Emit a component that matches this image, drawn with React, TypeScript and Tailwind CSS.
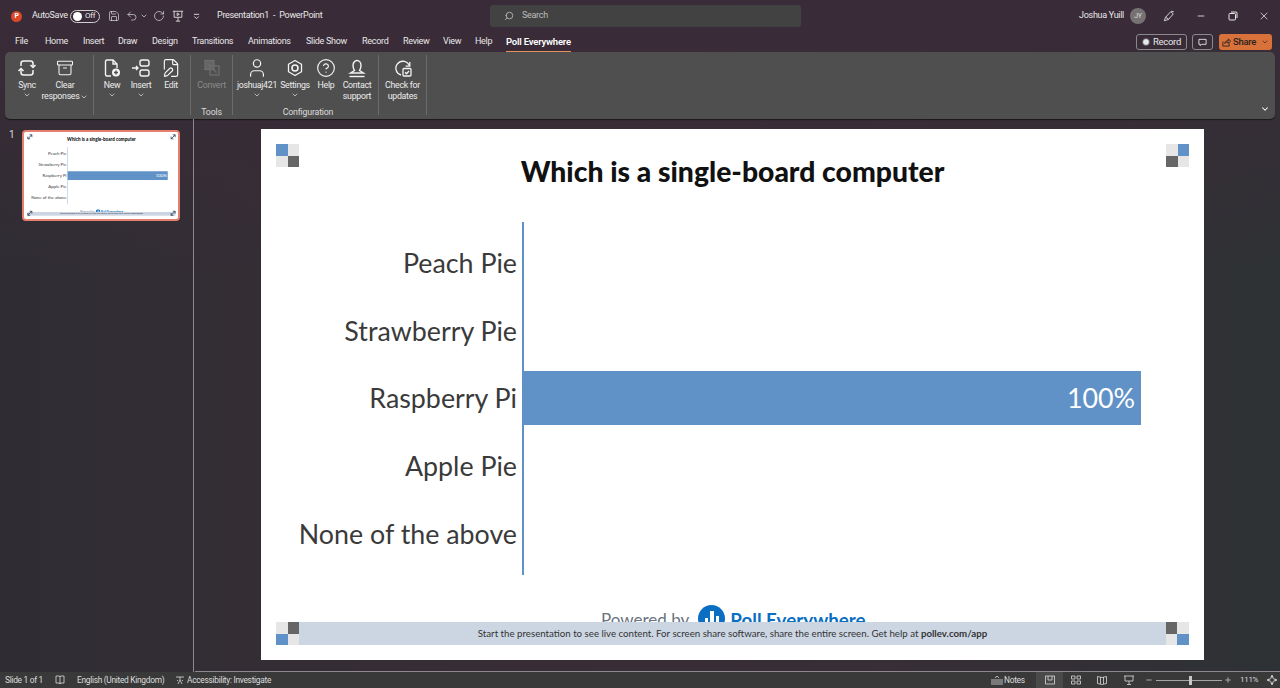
import React from "react";
import { Archive, ChevronDown, CircleHelp, FilePen, Minus, Plus, RotateCw, Save, Search, Undo2, User, X } from "lucide-react";

const uiFont = "font-['Roboto','Noto_Sans',sans-serif]";
const slideFont = "font-['Lato','Noto_Sans',sans-serif]";

const tabs = [
    { label: "File", w: "w-[30px]" },
    { label: "Home", w: "w-[38px]" },
    { label: "Insert", w: "w-[35px]" },
    { label: "Draw", w: "w-[34px]" },
    { label: "Design", w: "w-[40px]" },
    { label: "Transitions", w: "w-[56px]" },
    { label: "Animations", w: "w-[58px]" },
    { label: "Slide Show", w: "w-[56px]" },
    { label: "Record", w: "w-[41px]" },
    { label: "Review", w: "w-[40px]" },
    { label: "View", w: "w-[32px]" },
];

const answers = ["Peach Pie", "Strawberry Pie", "Raspberry Pi", "Apple Pie", "None of the above"];

const Small: React.FC = () => <ChevronDown className="w-[8px] h-[8px] text-[#e8e8e8]" strokeWidth={2} />;

const SyncIcon = () => (
    <svg viewBox="0 0 20 20" className="w-5 h-5" fill="none" stroke="#f4f4f4" strokeWidth="1.5">
        <path d="M4 8V5.500A2.500 2.500 0 0 1 6.500 3h7A2.500 2.500 0 0 1 16 5.500V9" />
        <path d="M13.500 7 16 9.500 18.500 7" />
        <path d="M16 12v2.500a2.500 2.500 0 0 1-2.500 2.500h-7A2.500 2.500 0 0 1 4 14.500V11" />
        <path d="M1.500 13 4 10.500 6.500 13" />
    </svg>
);

const NewIcon = () => (
    <svg viewBox="0 0 20 20" className="w-5 h-5" fill="none" stroke="#f4f4f4" strokeWidth="1.400">
        <path d="M9 18H5a1.500 1.500 0 0 1-1.500-1.500v-13A1.500 1.500 0 0 1 5 2h6l4 4v4" />
        <path d="M11 2v4h4" />
        <circle cx="14" cy="14.500" r="4" fill="#f4f4f4" stroke="none" />
        <path d="M14 12.500v4M12 14.500h4" stroke="#4f4f4f" />
    </svg>
);

const InsertIcon = () => (
    <svg viewBox="0 0 20 20" className="w-5 h-5" fill="none" stroke="#f4f4f4" strokeWidth="1.400">
        <rect x="9" y="2" width="9" height="6" rx="2" />
        <rect x="9" y="12" width="9" height="6" rx="2" />
        <path d="M1 10h6M5 8l2 2-2 2" />
    </svg>
);

const ConvertIcon = () => (
    <svg viewBox="0 0 20 20" className="w-5 h-5" fill="none" stroke="#6e6e6e" strokeWidth="1.300">
        <rect x="3" y="2.500" width="9" height="9" fill="#656565" />
        <rect x="8" y="8" width="9" height="9" />
        <path d="M6 6l2.500 2.500M14.500 14.500 12 12" />
    </svg>
);

const SettingsIcon = () => (
    <svg viewBox="0 0 20 20" className="w-5 h-5" fill="none" stroke="#f4f4f4" strokeWidth="1.300">
        <path d="M10 2.500l6.500 3.700v7.600L10 17.500l-6.500-3.700V6.200z" strokeLinejoin="round" />
        <circle cx="10" cy="10" r="3" strokeWidth="1.600" />
    </svg>
);

const SupportIcon = () => (
    <svg viewBox="0 0 20 20" className="w-5 h-5" fill="none" stroke="#f4f4f4" strokeWidth="1.400">
        <path d="M6 7.500a4 5 0 1 1 8 0c0 2.500-1 4-1.500 5l4 2.500H3.500l4-2.500C7 11.500 6 10 6 7.500z" />
        <path d="M2.500 18.500h15" />
    </svg>
);

const UpdatesIcon = () => (
    <svg viewBox="0 0 20 20" className="w-5 h-5" fill="none" stroke="#f4f4f4" strokeWidth="1.300">
        <path d="M8 17a7 7 0 1 1 8.500-9" />
        <path d="M16.800 4v4.200h-4.200" />
        <rect x="10" y="10.500" width="8" height="7.500" rx="1" />
        <path d="M12 14.200l1.500 1.500 2.500-2.700" />
    </svg>
);

type BtnProps = { icon: React.ReactNode; lines: string[]; w: string; caret?: boolean; disabled?: boolean };

const RibbonButton: React.FC<BtnProps> = ({ icon, lines, w, caret, disabled }) => (
    <div className={`${w} flex flex-col items-center shrink-0 ${disabled ? "text-[#8a8a8a]" : "text-[#ececec]"}`}>
        <div className="h-5 flex items-center justify-center">{icon}</div>
        <div className="mt-[2px] text-[8.800px] tracking-[-0.3px] leading-[11px] text-center whitespace-nowrap">
            {lines.map((l) => (
                <div key={l}>{l}</div>
            ))}
        </div>
        {caret && <Small />}
    </div>
);

const Group: React.FC<{ w: string; pl?: string; label?: string; children: React.ReactNode }> = ({ w, pl, label, children }) => (
    <div className={`${w} h-[60px] shrink-0 border-r border-[#6b6b6b] flex flex-col pt-[3px] ${pl ?? ""}`}>
        <div className="flex flex-1">{children}</div>
        {label && <div className="text-[8.800px] tracking-[-0.2px] leading-[10px] text-center text-[#dcdcdc] -mb-[2px]">{label}</div>}
    </div>
);

const Checker: React.FC<{ cells: string[] }> = ({ cells }) => (
    <div className="grid grid-cols-2 w-[23px] h-[23px] shrink-0">
        {cells.map((c, i) => (
            <div key={i} className={c} />
        ))}
    </div>
);

const B = "bg-[#6092c7]";
const L = "bg-[#e6e6e6]";
const D = "bg-[#666666]";

const ThumbArrow: React.FC<{ pos: string }> = ({ pos }) => (
    <svg viewBox="0 0 20 20" className={`absolute w-[36px] h-[36px] ${pos}`} fill="none" stroke="#33475b" strokeWidth="3">
        <path d="M3 17 17 3M9 3h8v8M3 9v8h8" />
    </svg>
);

const Slide: React.FC<{ thumb?: boolean }> = ({ thumb }) => (
    <div className={`relative w-[943px] h-[531px] bg-white flex flex-col overflow-hidden ${slideFont}`}>
        {!thumb && (
            <>
                <div className="absolute left-[15px] top-[15px]">
                    <Checker cells={[B, L, L, D]} />
                </div>
                <div className="absolute right-[15px] top-[15px]">
                    <Checker cells={[L, B, D, L]} />
                </div>
            </>
        )}
        {thumb && (
            <>
                <ThumbArrow pos="left-[12px] top-[12px]" />
                <ThumbArrow pos="right-[12px] top-[12px]" />
                <ThumbArrow pos="left-[12px] bottom-[12px]" />
                <ThumbArrow pos="right-[12px] bottom-[12px]" />
            </>
        )}
        <div className="h-[93px] shrink-0 pb-[9px] flex items-center justify-center text-[28.300px] font-black text-[#111]">
            Which is a single-board computer
        </div>
        <div className="h-[353px] shrink-0 flex">
            <div className="w-[256px] shrink-0 py-[7px] flex flex-col">
                {answers.map((a) => (
                    <div key={a} className="h-[67.800px] flex items-center justify-end text-[26.800px] text-[#3a3a3a] whitespace-nowrap">
                        {a}
                    </div>
                ))}
            </div>
            <div className="ml-[5px] flex-1 py-[7px] flex flex-col border-l-2 border-[#6092c7]">
                {answers.map((a) => (
                    <div key={a} className="h-[67.800px] flex items-center">
                        {a === "Raspberry Pi" && (
                            <div className="h-[54px] w-[617px] bg-[#6092c7] text-white text-[26.800px] flex items-center justify-end pr-[6px]">
                                100%
                            </div>
                        )}
                    </div>
                ))}
            </div>
        </div>
        <div className="mt-[30px] h-[17px] shrink-0 overflow-hidden flex items-start pl-[340px] text-[#6b7480]">
            <span className="text-[17px] leading-[26px] whitespace-nowrap mt-[2px]">Powered by</span>
            <span className="ml-[9px] w-[27px] h-[27px] rounded-full bg-[#0a6fc2] shrink-0 flex items-end justify-center gap-[2px] pb-[4px]">
                <span className="w-[3px] h-[10px] bg-white" />
                <span className="w-[4px] h-[17px] bg-white" />
                <span className="w-[3px] h-[12px] bg-white" />
            </span>
            <span className="ml-[5px] text-[18.800px] leading-[26px] font-bold text-[#0a6fc2] whitespace-nowrap mt-[2px]">Poll Everywhere</span>
        </div>
        <div className="mx-[15px] h-[23px] shrink-0 bg-[#ccd6e3] flex items-center justify-between">
            {thumb ? <div /> : <Checker cells={[L, D, B, L]} />}
            <div className="text-[9.700px] text-[#333] whitespace-nowrap">
                Start the presentation to see live content. For screen share software, share the entire screen. Get help at <b>pollev.com/app</b>
            </div>
            {thumb ? <div /> : <Checker cells={[D, L, L, B]} />}
        </div>
    </div>
);

const App: React.FC = () => {
    return (
        <div className={`w-[1280px] h-[688px] overflow-hidden flex flex-col text-[#e8e8e8] bg-[linear-gradient(180deg,#3a2b38_0%,#3a2b3800_40%),linear-gradient(90deg,#2f2d33_0%,#392d35_45%,#372e36_70%,#2e3234_100%)] ${uiFont}`}>
            {/* title bar */}
            <div className="h-[32px] shrink-0 flex items-center text-[9px] tracking-[-0.3px]">
                <div className="w-[490px] shrink-0 flex items-center">
                    <div className="ml-[11px] w-[11px] h-[11px] rounded-full bg-[#d9482b] text-[7px] font-bold text-white flex items-center justify-center">P</div>
                    <span className="ml-[10px] w-[38px] whitespace-nowrap">AutoSave</span>
                    <div className="w-[30px] h-[13px] rounded-full border border-[#cfcfcf] flex items-center pl-[2px] text-[8px]">
                        <span className="w-[9px] h-[9px] rounded-full bg-white shrink-0" />
                        <span className="ml-[3px]">Off</span>
                    </div>
                    <Save className="ml-[8px] w-[12px] h-[12px]" strokeWidth={1.300} />
                    <Undo2 className="ml-[6px] w-[12px] h-[12px]" strokeWidth={1.300} />
                    <ChevronDown className="ml-[2px] w-[8px] h-[8px]" />
                    <RotateCw className="ml-[5px] w-[12px] h-[12px]" strokeWidth={1.300} />
                    <svg viewBox="0 0 14 14" className="ml-[7px] w-[12px] h-[12px]" fill="none" stroke="#e8e8e8">
                        <path d="M1 1.500h12M2.500 1.500v7h9v-7M7 8.500V13M4.500 13h5M6 3.500l2.500 1.500L6 6.500z" />
                    </svg>
                    <svg viewBox="0 0 8 8" className="ml-[9px] w-[7px] h-[7px]" fill="none" stroke="#e8e8e8">
                        <path d="M1 1.500h6M1.500 4 4 6.500 6.500 4" />
                    </svg>
                    <span className="ml-[17px] whitespace-nowrap">
                        Presentation1<span className="mx-[4px]">-</span>PowerPoint
                    </span>
                </div>
                <div className="w-[311px] h-[22px] rounded-[3px] bg-[#424242] flex items-center pl-[14px] text-[#bdbdbd]">
                    <Search className="w-[10px] h-[10px] -scale-x-100" />
                    <span className="ml-[8px]">Search</span>
                </div>
                <div className="ml-auto flex items-center">
                    <span className="whitespace-nowrap">Joshua Yuill</span>
                    <span className="ml-[6px] w-[16px] h-[16px] rounded-full bg-[#767272] text-[7px] flex items-center justify-center text-[#ddd]">JY</span>
                    <svg viewBox="0 0 14 14" className="ml-[17px] w-[12px] h-[12px]" fill="none" stroke="#e8e8e8">
                        <path d="M1.500 12.500 3 8.500 9 2l3 2.500-5.500 6.500zM3 8.500l3.500 2M9.500 1.500l3 .500" />
                    </svg>
                    <Minus className="ml-[21px] w-[10px] h-[10px]" />
                    <svg viewBox="0 0 10 10" className="ml-[22px] w-[10px] h-[10px]" fill="none" stroke="#e8e8e8">
                        <rect x="1" y="2.500" width="6.500" height="6.500" rx="1" />
                        <path d="M3 1h5a1 1 0 0 1 1 1v5" />
                    </svg>
                    <X className="ml-[20px] mr-[10px] w-[12px] h-[12px]" strokeWidth={1.500} />
                </div>
            </div>

            {/* tabs */}
            <div className="h-[20px] shrink-0 flex items-center pl-[15px] text-[9px] tracking-[-0.3px]">
                {tabs.map((t) => (
                    <span key={t.label} className={`${t.w} shrink-0 whitespace-nowrap`}>
                        {t.label}
                    </span>
                ))}
                <span className="w-[31px] shrink-0">Help</span>
                <span className="relative text-[9.500px] tracking-[-0.2px] font-semibold text-white whitespace-nowrap">
                    Poll Everywhere
                    <span className="absolute left-0 right-0 -bottom-[3px] h-[1px] bg-[#e5905f]" />
                </span>
                <div className="ml-auto mr-[8px] flex items-center text-[9.500px]">
                    <div className="w-[51px] h-[16px] rounded-[3px] border border-[#8a8a8a] flex items-center justify-center gap-[3px]">
                        <span className="w-[8px] h-[8px] rounded-full bg-[#e8e8e8] border border-[#555]" />
                        Record
                    </div>
                    <div className="ml-[5px] w-[21px] h-[16px] rounded-[3px] border border-[#8a8a8a] flex items-center justify-center">
                        <svg viewBox="0 0 10 10" className="w-[9px] h-[9px]" fill="none" stroke="#e8e8e8">
                            <path d="M1 1.500h8v5.500H4L2.500 8.500V7H1z" />
                        </svg>
                    </div>
                    <div className="ml-[6px] w-[53px] h-[16px] rounded-[3px] bg-[#d9713a] text-[#2b2320] flex items-center justify-center gap-[2px] font-medium">
                        <svg viewBox="0 0 10 10" className="w-[9px] h-[9px]" fill="none" stroke="#2b2320">
                            <path d="M1 4v5h7V6M3 6c0-2 2-3 4-3V1l2.500 2.500L7 6V4.500C5.500 4.500 4 5 3 6z" />
                        </svg>
                        Share
                        <ChevronDown className="ml-[3px] w-[8px] h-[8px]" />
                    </div>
                </div>
            </div>

            {/* ribbon */}
            <div className="mx-[5px] h-[67px] shrink-0 rounded-[5px] bg-[#4f4f4f] flex pt-[3px] pl-[3px] shadow-[0_1px_1px_rgba(0,0,0,0.5)]">
                <Group w="w-[86px]">
                    <RibbonButton icon={<SyncIcon />} lines={["Sync"]} w="w-[38px]" caret />
                    <div className="w-[38px] shrink-0 flex flex-col items-center text-[#ececec]">
                        <div className="h-5 flex items-center">
                            <Archive className="w-[18px] h-[18px] text-[#f4f4f4]" strokeWidth={1.400} />
                        </div>
                        <div className="mt-[2px] text-[8.800px] tracking-[-0.3px] leading-[11px] text-center whitespace-nowrap flex flex-col items-center">
                            <div>Clear</div>
                            <div className="flex items-center gap-[1px]">
                                responses <Small />
                            </div>
                        </div>
                    </div>
                </Group>
                <Group w="w-[97px]" pl="pl-[4px]">
                    <RibbonButton icon={<NewIcon />} lines={["New"]} w="w-[28px]" caret />
                    <RibbonButton icon={<InsertIcon />} lines={["Insert"]} w="w-[30px]" caret />
                    <RibbonButton icon={<FilePen className="w-5 h-5 text-[#f4f4f4]" strokeWidth={1.400} />} lines={["Edit"]} w="w-[30px]" />
                </Group>
                <Group w="w-[42px]" label="Tools">
                    <RibbonButton icon={<ConvertIcon />} lines={["Convert"]} w="w-[41px]" disabled />
                </Group>
                <Group w="w-[146px]" pl="pl-[5px]" label="Configuration">
                    <RibbonButton icon={<User className="w-[22px] h-[22px] text-[#f4f4f4]" strokeWidth={1.300} />} lines={["joshuaj421"]} w="w-[38px]" caret />
                    <RibbonButton icon={<SettingsIcon />} lines={["Settings"]} w="w-[38px]" caret />
                    <RibbonButton icon={<CircleHelp className="w-5 h-5 text-[#f4f4f4]" strokeWidth={1.400} />} lines={["Help"]} w="w-[24px]" />
                    <RibbonButton icon={<SupportIcon />} lines={["Contact", "support"]} w="w-[38px]" />
                </Group>
                <Group w="w-[48px]">
                    <RibbonButton icon={<UpdatesIcon />} lines={["Check for", "updates"]} w="w-[47px]" />
                </Group>
                <ChevronDown className="ml-auto mr-[5px] self-end mb-[5px] w-[10px] h-[10px] text-white" strokeWidth={2.500} />
            </div>

            {/* main */}
            <div className="flex-1 min-h-0 flex">
                <div className="w-[194px] shrink-0 border-r border-[#8c8790] flex items-start pl-[9px] pt-[11px]">
                    <span className="text-[10px] leading-[10px] w-[13px] text-[#d8d8d8]">1</span>
                    <div className="w-[158px] h-[91px] rounded-[4px] border-2 border-[#e5806f] overflow-hidden bg-white">
                        <div className="w-[943px] h-[531px] origin-top-left scale-[0.1622] ml-[1px]">
                            <Slide thumb />
                        </div>
                    </div>
                </div>
                <div className="flex-1 border-b border-[#8c8790] ml-[1px] pl-[66px] pt-[10px]">
                    <Slide />
                </div>
            </div>

            {/* status bar */}
            <div className="h-[16px] shrink-0 bg-[#393939] flex items-center text-[8.400px] tracking-[-0.3px] text-[#dcdcdc]">
                <span className="ml-[5px] w-[50px] whitespace-nowrap">Slide 1 of 1</span>
                <svg viewBox="0 0 10 10" className="w-[10px] h-[10px]" fill="none" stroke="#dcdcdc" strokeWidth="0.800">
                    <path d="M1 1h3.500L5 2l.5-1H9v7H5.500L5 9l-.5-1H1zM5 2v7" />
                </svg>
                <span className="ml-[12px] w-[98px] whitespace-nowrap">English (United Kingdom)</span>
                <svg viewBox="0 0 10 10" className="w-[10px] h-[10px]" fill="none" stroke="#dcdcdc" strokeWidth="0.800">
                    <path d="M1 2h8M5 2v3M3 9l2-4 2 4M2 5l1 1M8 5 7 6" />
                </svg>
                <span className="ml-[2px] whitespace-nowrap">Accessibility: Investigate</span>
                <div className="ml-auto flex items-center h-full">
                    <svg viewBox="0 0 12 10" className="w-[12px] h-[10px]" fill="none" stroke="#dcdcdc" strokeWidth="0.800">
                        <path d="M0 5h12M0 7h12M0 9h12M4 3l2-2 2 2" />
                    </svg>
                    <span className="ml-[1px] w-[32px]">Notes</span>
                    <div className="w-[27px] h-full bg-[#4a4a4a] flex items-center justify-center">
                        <svg viewBox="0 0 10 10" className="w-[10px] h-[10px]" fill="none" stroke="#dcdcdc" strokeWidth="0.800">
                            <path d="M.5 1h9v8h-9zM3 1v4h4V1" />
                        </svg>
                    </div>
                    <svg viewBox="0 0 10 10" className="ml-[8px] w-[10px] h-[10px]" fill="none" stroke="#dcdcdc" strokeWidth="0.800">
                        <path d="M.5 1h3.500v3H.5zM6 1h3.500v3H6zM.5 6h3.500v3H.5zM6 6h3.500v3H6z" />
                    </svg>
                    <svg viewBox="0 0 10 10" className="ml-[16px] w-[10px] h-[10px]" fill="none" stroke="#dcdcdc" strokeWidth="0.800">
                        <path d="M.5 1.500 5 2.500l4.500-1v7L5 9.500l-4.500-1zM3.500 2v7M6.500 2v7" />
                    </svg>
                    <svg viewBox="0 0 10 10" className="ml-[17px] w-[10px] h-[10px]" fill="none" stroke="#dcdcdc" strokeWidth="0.800">
                        <path d="M0 1h10M1 1v5h8V1M5 6v3.500M3 9.500h4" />
                    </svg>
                    <Minus className="ml-[11px] w-[8px] h-[8px]" />
                    <div className="ml-[3px] w-[66px] h-[1px] bg-[#a5a5a5] relative">
                        <span className="absolute left-[33px] -top-[4px] w-[3px] h-[9px] bg-[#c8c8c8]" />
                    </div>
                    <Plus className="ml-[2px] w-[8px] h-[8px]" />
                    <span className="ml-[8px] w-[20px] text-[8px]">111%</span>
                    <svg viewBox="0 0 10 10" className="ml-[7px] mr-[3px] w-[10px] h-[10px]" fill="none" stroke="#dcdcdc" strokeWidth="0.800">
                        <circle cx="5" cy="5" r="2.500" />
                        <path d="M5 0 4 1.500h2zM5 10 4 8.500h2zM0 5l1.500-1v2zM10 5 8.500 4v2z" />
                    </svg>
                </div>
            </div>
        </div>
    );
};

export default App;
